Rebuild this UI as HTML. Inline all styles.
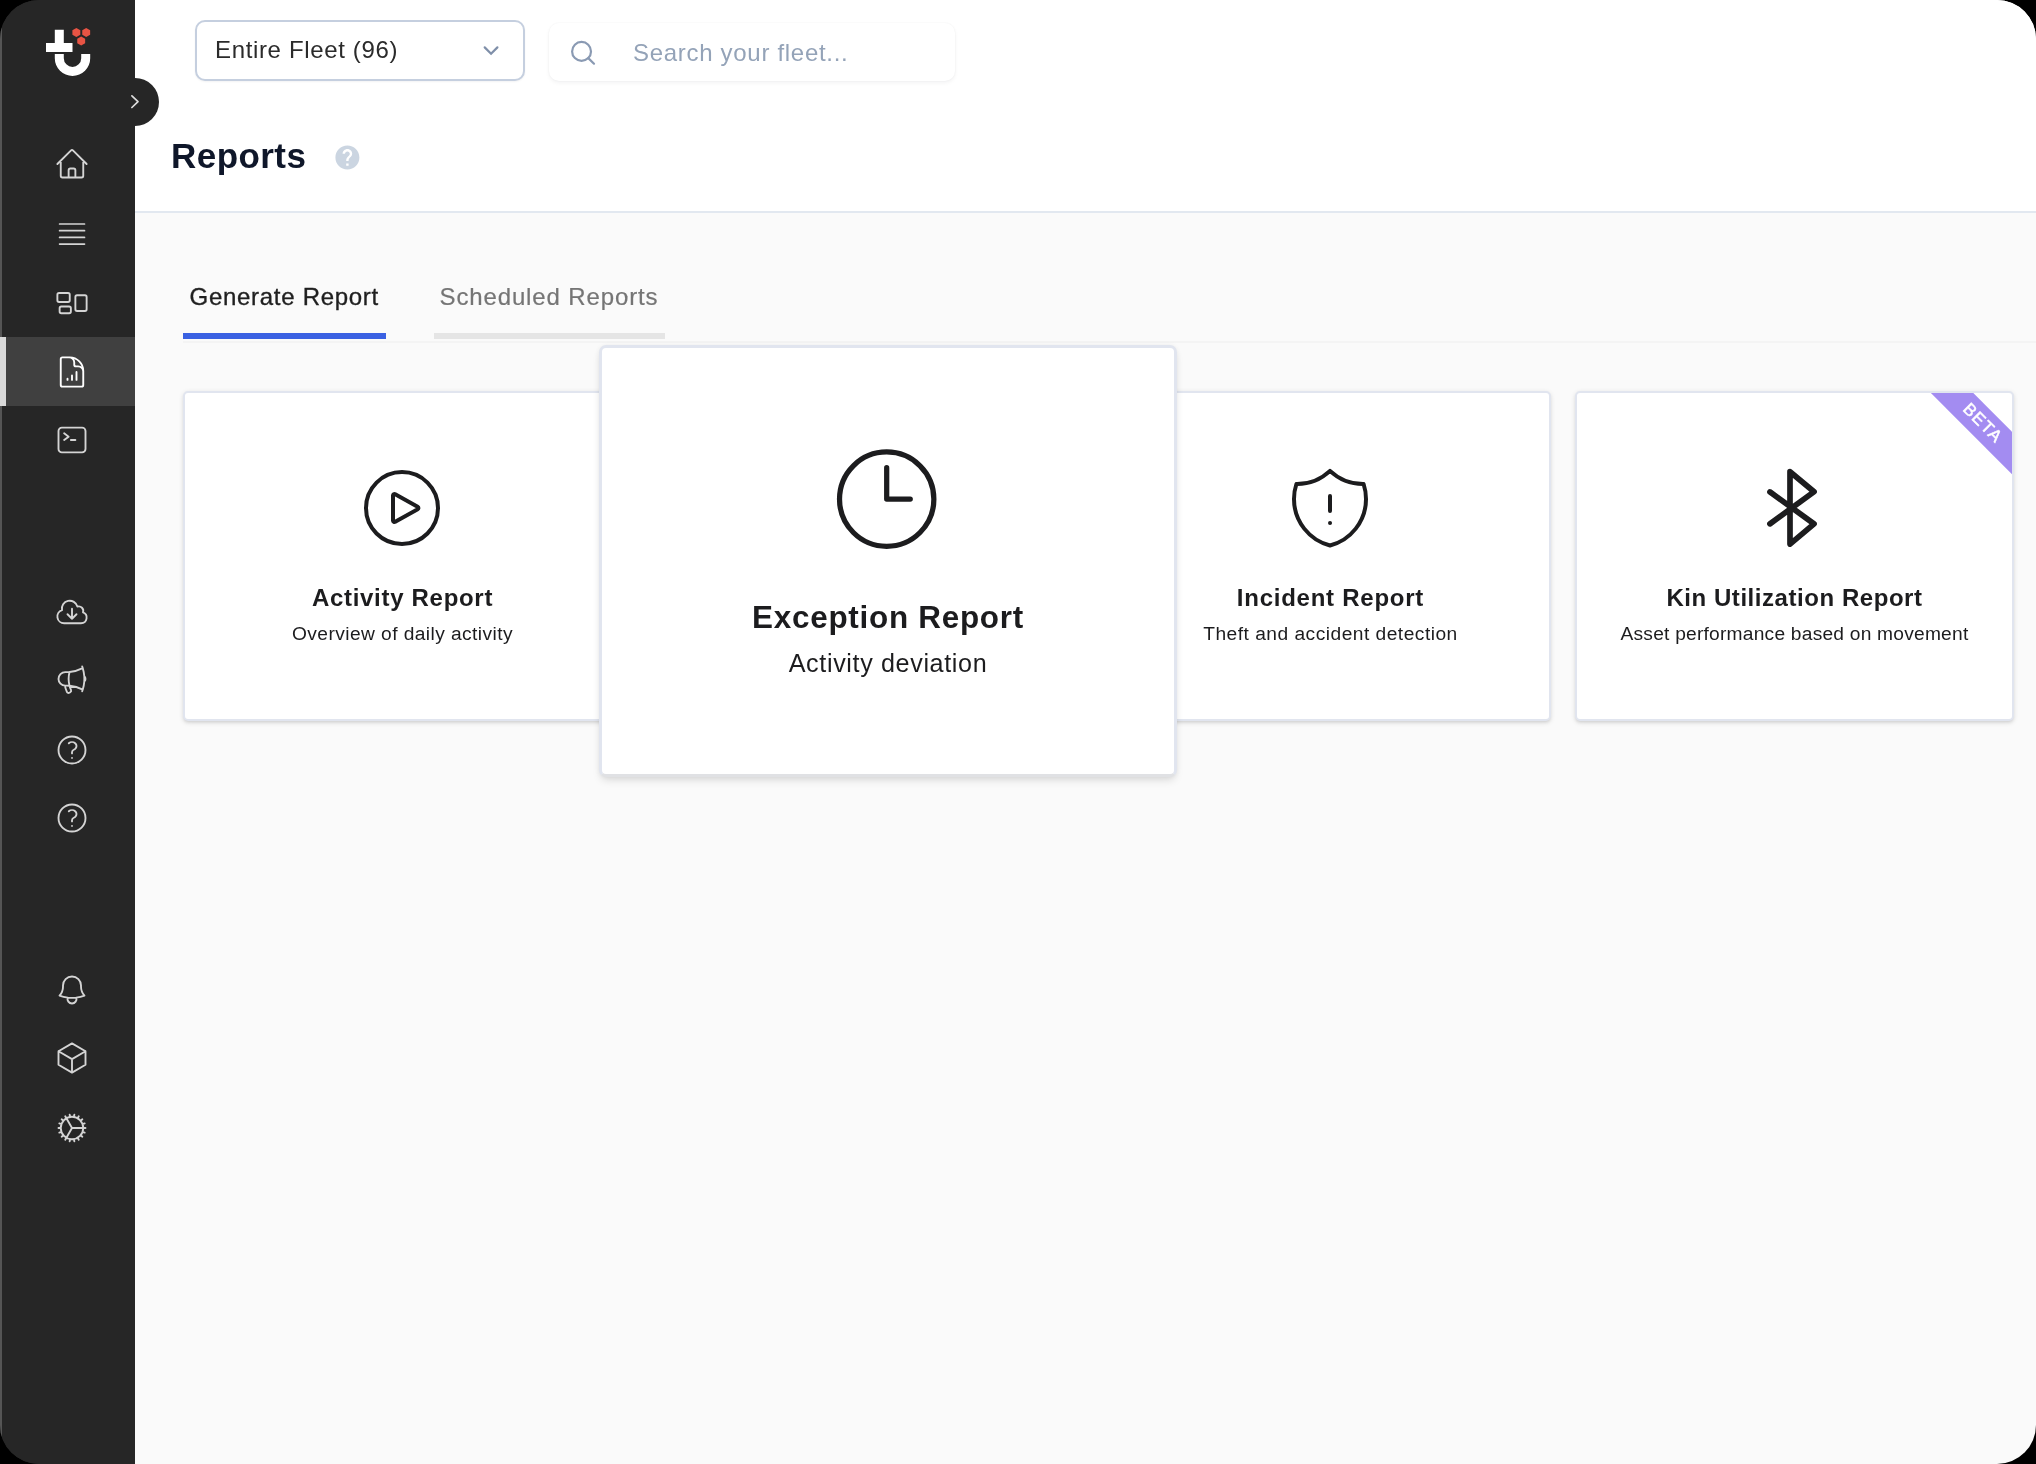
<!DOCTYPE html>
<html lang="en">
<head>
<meta charset="utf-8">
<title>Reports</title>
<style>
*{box-sizing:border-box;margin:0;padding:0}
html,body{width:2036px;height:1464px;background:#000;overflow:hidden}
body{font-family:"Liberation Sans",sans-serif;color:#1a1a1a}
#app{will-change:transform;position:absolute;left:0;top:0;width:2036px;height:1464px;border-radius:39px;overflow:hidden;background:linear-gradient(to right,#262626 0,#262626 135px,#fafafa 135px,#fafafa 100%)}
.abs{position:absolute}
/* sidebar */
#side{position:absolute;left:0;top:0;width:135px;height:1464px;background:#262626}
#strip{position:absolute;left:0;top:0;width:2px;height:1464px;background:#555}
#active{position:absolute;left:0;top:337px;width:135px;height:69px;background:#404040}
#active i{position:absolute;left:0;top:0;width:6px;height:69px;background:#d9d9d9}
.ico{position:absolute;left:53.85px;width:36px;height:36px;fill:none;stroke:#d4d4d4;stroke-width:1.25;stroke-linecap:round;stroke-linejoin:round;overflow:visible}
#toggle{position:absolute;left:134px;top:78px;width:25px;height:48px;border-radius:0 24px 24px 0;background:#262626}
/* header */
#head{position:absolute;left:135px;top:0;width:1901px;height:213px;background:#fff;border-bottom:2px solid #e2e8f0}
#fleet{position:absolute;left:195px;top:20px;width:330px;height:61px;border:2px solid #c5cfdf;border-radius:10px;background:#fff;box-shadow:0 1px 2px rgba(15,23,42,.05)}
#fleet span{position:absolute;left:18px;top:13.6px;font-size:24px;line-height:28px;color:#2b2b2b;white-space:nowrap;letter-spacing:.65px}
#search{position:absolute;left:549px;top:23px;width:406px;height:58px;border-radius:10px;background:#fff;box-shadow:0 2px 4px rgba(15,23,42,.05),0 0 2px rgba(15,23,42,.05)}
#search span{position:absolute;left:84px;top:16px;font-size:24px;line-height:28px;color:#94a3b8;white-space:nowrap;letter-spacing:.7px}
#title{position:absolute;left:171px;top:136.2px;font-size:35px;line-height:40px;font-weight:bold;color:#0f172a;white-space:nowrap;letter-spacing:.45px}
/* tabs */
.tab{position:absolute;top:283.4px;font-size:24px;line-height:28px;white-space:nowrap}
#tab1{left:189.6px;color:#1f1f1f;letter-spacing:.7px;-webkit-text-stroke:.35px #1f1f1f}
#tab2{left:439.5px;color:#757575;letter-spacing:.87px;-webkit-text-stroke:.2px #757575}
#ul1{position:absolute;left:183px;top:333px;width:203px;height:6px;background:#3a61e2}
#ul2{position:absolute;left:434px;top:333px;width:231px;height:6px;background:#e5e5e5}
#tabline{position:absolute;left:183px;top:341px;width:1853px;height:2px;background:#f4f4f4}
/* cards */
.card{position:absolute;top:391px;width:439px;height:330px;background:#fff;border:2px solid #e1e5ef;border-radius:5px;box-shadow:0 1.6px 4.8px rgba(0,0,0,.1),0 1.6px 3.2px -1.6px rgba(0,0,0,.1);overflow:hidden}
.card h3{position:absolute;left:0;width:100%;top:191.4px;text-align:center;font-size:24px;line-height:28px;font-weight:bold;color:#1c1c1e;white-space:nowrap;letter-spacing:.4px}
.card p{position:absolute;left:0;width:100%;top:228.5px;text-align:center;font-size:19.2px;line-height:24px;color:#1c1c1e;white-space:nowrap;letter-spacing:.75px}
.card svg.big{position:absolute;left:calc(50% - 48.7px);top:66.7px;width:96px;height:96px;fill:none;stroke:#1c1c1e;stroke-linecap:round;stroke-linejoin:round;overflow:visible}
#ribbon{position:absolute;left:340.1px;top:14.6px;width:130px;height:30.4px;background:#a38cf1;transform:rotate(45deg);transform-origin:50% 50%;text-align:center}
#ribbon span{display:block;color:#fff;font-size:17px;line-height:30.4px;letter-spacing:1.2px;-webkit-text-stroke:.5px #fff;padding-left:1px}
</style>
</head>
<body>
<div id="app">
  <div id="head"></div>
  <div id="side"></div>
  <div id="strip"></div>
  <div id="active"><i></i></div>
  <div id="toggle"></div>
  <svg class="ico" id="i-home" style="top:145.8px" viewBox="0 0 24 24"><path d="M2.25 12l8.954-8.955c.44-.439 1.152-.439 1.591 0L21.75 12M4.5 9.75v10.125c0 .621.504 1.125 1.125 1.125H9.75v-4.875c0-.621.504-1.125 1.125-1.125h2.25c.621 0 1.125.504 1.125 1.125V21h4.125c.621 0 1.125-.504 1.125-1.125V9.75M8.25 21h8.25"/></svg>
  <svg class="ico" id="i-rect" style="top:283.9px" viewBox="0 0 24 24"><path d="M2.25 7.125C2.25 6.504 2.754 6 3.375 6h6c.621 0 1.125.504 1.125 1.125v3.75c0 .621-.504 1.125-1.125 1.125h-6a1.125 1.125 0 01-1.125-1.125v-3.75zM14.25 8.625c0-.621.504-1.125 1.125-1.125h5.25c.621 0 1.125.504 1.125 1.125v8.25c0 .621-.504 1.125-1.125 1.125h-5.25a1.125 1.125 0 01-1.125-1.125v-8.25zM3.75 16.125c0-.621.504-1.125 1.125-1.125h5.25c.621 0 1.125.504 1.125 1.125v2.25c0 .621-.504 1.125-1.125 1.125h-5.25a1.125 1.125 0 01-1.125-1.125v-2.25z"/></svg>
  <svg class="ico" id="i-doc" style="top:353.8px;stroke:#fff" viewBox="0 0 24 24"><path d="M19.5 14.25v-2.625a3.375 3.375 0 00-3.375-3.375h-1.5A1.125 1.125 0 0113.5 7.125v-1.5a3.375 3.375 0 00-3.375-3.375H8.25M9 16.5v.75m3-3v3M15 12v5.25m-4.5-15H5.625c-.621 0-1.125.504-1.125 1.125v17.25c0 .621.504 1.125 1.125 1.125h12.75c.621 0 1.125-.504 1.125-1.125V11.25a9 9 0 00-9-9z"/></svg>
  <svg class="ico" id="i-term" style="top:422px" viewBox="0 0 24 24"><path d="M6.75 7.5l3 2.25-3 2.25m4.5 0h3m-9 8.25h13.5A2.25 2.25 0 0021 18V6a2.25 2.25 0 00-2.25-2.25H5.25A2.25 2.25 0 003 6v12a2.25 2.25 0 002.25 2.25z"/></svg>
  <svg class="ico" id="i-cloud" style="top:594.05px" viewBox="0 0 24 24"><path d="M12 9.75v6.75m0 0l-3-3m3 3l3-3m-8.25 6a4.5 4.5 0 01-1.41-8.775 5.25 5.25 0 0110.233-2.33 3 3 0 013.758 3.848A3.752 3.752 0 0118 19.5H6.75z"/></svg>
  <svg class="ico" id="i-mega" style="top:662.4px" viewBox="0 0 24 24"><path d="M10.34 15.84c-.688-.06-1.386-.09-2.09-.09H7.5a4.5 4.5 0 110-9h.75c.704 0 1.402-.03 2.09-.09m0 9.18c.253.962.584 1.892.985 2.783.247.55.06 1.21-.463 1.511l-.657.38c-.551.318-1.26.117-1.527-.461a20.845 20.845 0 01-1.44-4.282m3.102.069a18.03 18.03 0 01-.59-4.59c0-1.586.205-3.124.59-4.59m0 9.18a23.848 23.848 0 018.835 2.535M10.34 6.66a23.847 23.847 0 008.835-2.535m0 0A23.74 23.74 0 0018.795 3m.38 1.125a23.91 23.91 0 011.014 5.395m-1.014 8.855c-.118.38-.245.754-.38 1.125m.38-1.125a23.91 23.91 0 001.014-5.395m0-3.46c.495.413.811 1.035.811 1.73 0 .695-.316 1.317-.811 1.73m0-3.46a24.347 24.347 0 010 3.46"/></svg>
  <svg class="ico" id="i-q1" style="top:732px" viewBox="0 0 24 24"><path d="M9.879 7.519c1.171-1.025 3.071-1.025 4.242 0 1.172 1.025 1.172 2.687 0 3.712-.203.179-.43.326-.67.442-.745.361-1.45.999-1.45 1.827v.75M21 12a9 9 0 11-18 0 9 9 0 0118 0zm-9 5.25h.008v.008H12v-.008z"/></svg>
  <svg class="ico" id="i-q2" style="top:800.2px" viewBox="0 0 24 24"><path d="M9.879 7.519c1.171-1.025 3.071-1.025 4.242 0 1.172 1.025 1.172 2.687 0 3.712-.203.179-.43.326-.67.442-.745.361-1.45.999-1.45 1.827v.75M21 12a9 9 0 11-18 0 9 9 0 0118 0zm-9 5.25h.008v.008H12v-.008z"/></svg>
  <svg class="ico" id="i-bell" style="top:972.15px" viewBox="0 0 24 24"><path d="M14.857 17.082a23.848 23.848 0 005.454-1.31A8.967 8.967 0 0118 9.75v-.7V9A6 6 0 006 9v.75a8.967 8.967 0 01-2.312 6.022c1.733.64 3.56 1.085 5.455 1.31m5.714 0a24.255 24.255 0 01-5.714 0m5.714 0a3 3 0 11-5.714 0"/></svg>
  <svg class="ico" id="i-cube" style="top:1039.9px" viewBox="0 0 24 24"><path d="M21 7.5l-9-5.25L3 7.5m18 0l-9 5.25m9-5.25v9l-9 5.25M3 7.5l9 5.25M3 7.5v9l9 5.25m0-9v9"/></svg>
  <svg class="ico" id="i-cog" style="top:1109.9px" viewBox="0 0 24 24"><path d="M4.5 12a7.5 7.5 0 0015 0m-15 0a7.5 7.5 0 1115 0m-15 0H3m16.5 0H21m-1.5 0H12m-8.457 3.077l1.41-.513m14.095-5.13l1.41-.513M5.106 17.785l1.15-.964m11.49-9.642l1.149-.964M7.501 19.795l.75-1.3m7.5-12.99l.75-1.3m-6.063 16.658l.26-1.477m2.605-14.772l.26-1.477m0 17.726l-.26-1.477M10.698 4.614l-.26-1.477M16.5 19.794l-.75-1.299M7.5 4.205L12 12m6.894 5.785l-1.149-.964M6.256 7.178l-1.15-.964m15.352 8.864l-1.41-.513M4.954 9.435l-1.41-.514M12.002 12l-3.75 6.495"/></svg>
  <svg class="abs" style="left:0;top:0;overflow:visible" width="135" height="300"><g stroke="#d4d4d4" stroke-width="1.7" stroke-linecap="round" fill="none"><path d="M59.6 224H84.5M59.6 230.7H84.5M59.6 237.4H84.5M59.6 244.1H84.5"/></g></svg>
  <svg class="abs" id="logo" style="left:0;top:0;overflow:visible" width="135" height="100">
    <path fill="#fff" d="M54.8 29.8H63.8V42.9H72.5V52H46V42.9H54.8Z"/>
    <path fill="#fff" d="M54.8 53.9H63.8V58.2A8.7 8.7 0 0 0 81.2 58.2V53.9H90.2V58.2A17.7 17.7 0 0 1 54.8 58.2Z"/>
    <g fill="#e85444">
      <path d="M76.35 28L80.3 30.3V34.8L76.35 37.1L72.4 34.8V30.3Z"/>
      <path d="M86.2 28L90.15 30.3V34.8L86.2 37.1L82.25 34.8V30.3Z"/>
      <path d="M81.2 36.45L85.15 38.75V43.25L81.2 45.55L77.25 43.25V38.75Z"/>
    </g>
  </svg>
  <svg class="abs" style="left:111px;top:78px;overflow:visible" width="48" height="48"><path d="M20.9 17.8L27 23.65L20.9 29.5" fill="none" stroke="#dcdcdc" stroke-width="1.7" stroke-linecap="round" stroke-linejoin="round"/></svg>

  <div id="fleet"><span>Entire Fleet (96)</span><svg class="abs" style="left:0;top:0;overflow:visible" width="326" height="57"><path d="M287.7 25.4L294.05 31.75L300.4 25.4" fill="none" stroke="#7f8fa9" stroke-width="2.2" stroke-linecap="round" stroke-linejoin="miter"/></svg></div>
  <div id="search"><svg class="abs" style="left:0;top:0;overflow:visible" width="406" height="58"><g fill="none" stroke="#8a9ab3" stroke-width="2.2" stroke-linecap="round"><circle cx="32.55" cy="28.4" r="9.45"/><path d="M39.3 35.1L45 40.7"/></g></svg><span>Search your fleet...</span></div>
  <div id="title">Reports</div>
  <svg class="abs" style="left:332.6px;top:142.6px" width="28.8" height="28.8" viewBox="0 0 24 24"><path fill="#cbd5e1" d="M12 2C6.48 2 2 6.48 2 12s4.48 10 10 10 10-4.48 10-10S17.52 2 12 2zm1 17h-2v-2h2v2zm2.07-7.75l-.9.92C13.45 12.9 13 13.5 13 15h-2v-.5c0-1.1.45-2.1 1.17-2.83l1.24-1.26c.37-.36.59-.86.59-1.41 0-1.1-.9-2-2-2s-2 .9-2 2H8c0-2.21 1.79-4 4-4s4 1.79 4 4c0 .88-.36 1.68-.93 2.25z"/></svg>

  <div class="tab" id="tab1">Generate Report</div>
  <div class="tab" id="tab2">Scheduled Reports</div>
  <div id="ul1"></div><div id="ul2"></div><div id="tabline"></div>

  <div class="card" id="c1" style="left:183px">
    <svg class="big" viewBox="0 0 24 24" stroke-width="1"><path d="M21 12a9 9 0 11-18 0 9 9 0 0118 0z"/><path d="M15.91 11.672a.375.375 0 010 .656l-5.603 3.113a.375.375 0 01-.557-.328V8.887c0-.286.307-.466.557-.327l5.603 3.112z"/></svg>
    <h3 style="letter-spacing:.7px">Activity Report</h3><p style="letter-spacing:.42px">Overview of daily activity</p>
  </div>
  <div class="card" id="c3" style="left:1110px;width:441px">
    <svg class="big" viewBox="0 0 24 24" stroke-width="1"><path d="M12 9v3.75m0-10.036A11.959 11.959 0 013.598 6 11.99 11.99 0 003 9.75c0 5.592 3.824 10.29 9 11.622 5.176-1.332 9-6.03 9-11.622 0-1.31-.21-2.57-.598-3.75h-.152c-3.196 0-6.1-1.249-8.25-3.286zm0 13.036h.008v.008H12v-.008z"/></svg>
    <h3 style="letter-spacing:.75px">Incident Report</h3><p style="letter-spacing:.48px">Theft and accident detection</p>
  </div>
  <div class="card" id="c4" style="left:1575px;width:439px">
    <svg class="abs" style="left:0;top:0;overflow:visible;fill:none;stroke:#1c1c1e;stroke-width:5.7;stroke-linecap:round;stroke-linejoin:round" width="434" height="324" viewBox="1577 393 434 324"><path d="M1769.95 491.9L1814.05 523.85L1790 544.1V471.7L1814.05 491.75L1769.95 523.85"/></svg>
    <div id="ribbon"><span>BETA</span></div>
    <h3 style="letter-spacing:.55px">Kin Utilization Report</h3><p style="letter-spacing:.22px">Asset performance based on movement</p>
  </div>
  <div class="card" id="c2" style="left:599px;top:345px;width:578px;height:432px;border-width:3px;border-bottom-color:#e0e1e4;border-radius:7px;box-shadow:0 5px 8px -2px rgba(0,0,0,.13),0 0 5px rgba(0,0,0,.05)">
    <div class="abs" style="left:68.6px;top:50.6px;width:434px;height:326px;transform:scale(1.31);transform-origin:50% 50%">
      <svg class="big" viewBox="0 0 24 24" stroke-width="1"><path d="M12 6v6h4.5m4.5 0a9 9 0 11-18 0 9 9 0 0118 0z"/></svg>
      <h3 style="letter-spacing:.55px">Exception Report</h3><p style="letter-spacing:.48px">Activity deviation</p>
    </div>
  </div>
</div>
</body>
</html>
